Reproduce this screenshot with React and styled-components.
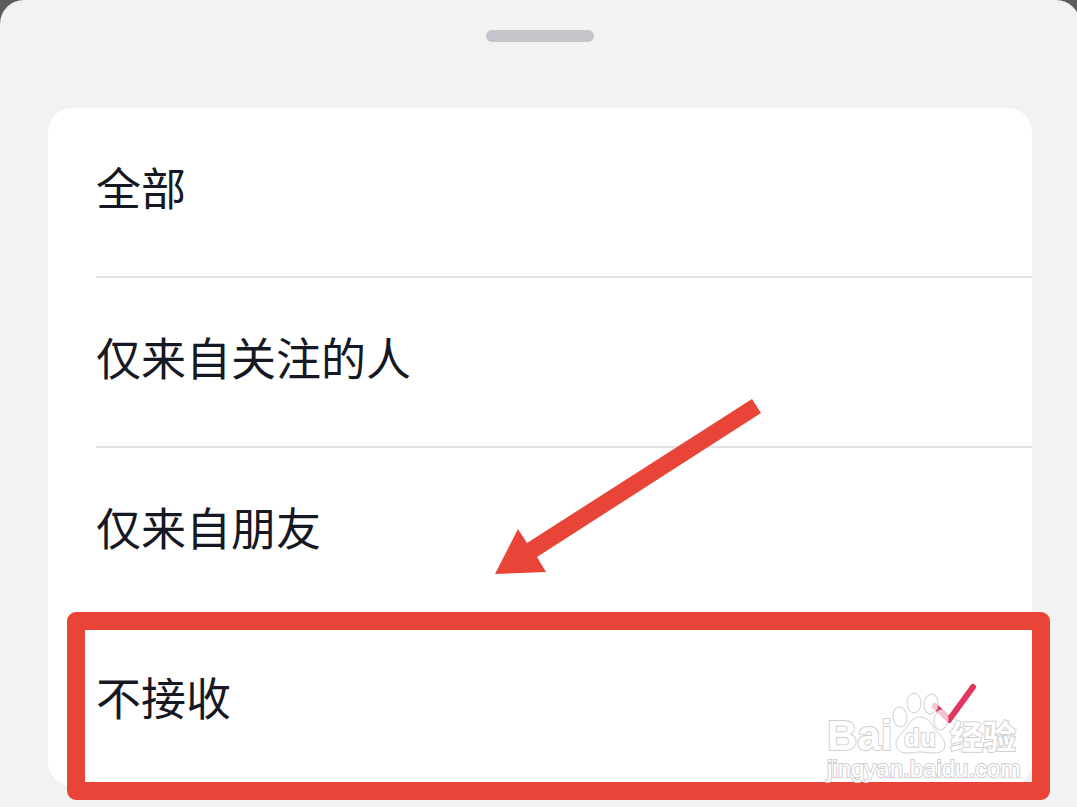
import React, { useState } from "react";
import styled, { createGlobalStyle } from "styled-components";

const GlobalStyle = createGlobalStyle`
  * { box-sizing: border-box; }
  body {
    margin: 0;
    background: #5c5c5c;
    color: #161823;
    font-family: "Noto Sans CJK SC", "Noto Sans", sans-serif;
  }
`;

const Backdrop = styled.main`
  background: #5c5c5c;
  overflow: hidden;
`;

const Sheet = styled.section`
  display: flex;
  flex-direction: column;
  min-height: 100vh;
  margin-right: -3px;
  padding: 30px 48px 21px;
  background: #f2f2f2;
  border-radius: 24px 24px 0 0;
`;

const Handle = styled.div`
  align-self: center;
  width: 108px;
  height: 12px;
  margin-bottom: 66px;
  border-radius: 6px;
  background: #c5c5cb;
`;

const OptionList = styled.div`
  position: relative;
  background: #ffffff;
  border-radius: 24px;
`;

const Option = styled.label`
  position: relative;
  display: flex;
  align-items: center;
  justify-content: space-between;
  height: 168px;
  margin-left: 48px;
  padding: 0 56px 10px 0;
  font-size: 45px;
  line-height: 64px;
  cursor: pointer;

  & + & {
    height: 170px;
    border-top: 2px solid #e3e3e4;
  }
`;

const Radio = styled.input`
  position: absolute;
  opacity: 0;
  pointer-events: none;
`;

const Check = styled.svg`
  width: 44px;
  height: 52px;
  fill: none;
  stroke: #e0365f;
  stroke-width: 6;
  stroke-linecap: round;
`;

const Highlight = styled.div`
  position: absolute;
  inset: auto -18px -14px 19px;
  height: 188px;
  border: 18px solid #e84538;
  border-radius: 9px;
  pointer-events: none;
`;

const Arrow = styled.svg`
  position: absolute;
  left: 446px;
  top: 290px;
  width: 268px;
  height: 178px;
  fill: #e84538;
  pointer-events: none;
`;

const Watermark = styled.svg`
  position: absolute;
  right: 10px;
  bottom: 0;
  width: 198px;
  height: 98px;
  fill: #ffffff;
  fill-opacity: 0.7;
  stroke: #d0d0d0;
  stroke-width: 1;
  pointer-events: none;
`;

const WatermarkText = styled.text`
  font-family: ${(p) => p.$family || "Liberation Sans"}, "Noto Sans CJK SC", sans-serif;
  font-size: ${(p) => p.$size}px;
  font-weight: ${(p) => p.$weight || 700};
  fill-opacity: 1;
  stroke-width: 2;
  paint-order: stroke;
`;

const options = ["全部", "仅来自关注的人", "仅来自朋友", "不接收"];

export default function App() {
  const [selected, setSelected] = useState("不接收");

  return (
    <>
      <GlobalStyle />
      <Backdrop>
        <Sheet>
          <Handle />
          <OptionList role="radiogroup">
            {options.map((name) => (
              <Option key={name}>
                <Radio
                  type="radio"
                  name="audience"
                  checked={selected === name}
                  onChange={() => setSelected(name)}
                />
                <span>{name}</span>
                {selected === name && (
                  <Check viewBox="0 0 44 52" aria-hidden="true">
                    <path d="M3 35L17 49L41 16" strokeLinejoin="miter" />
                  </Check>
                )}
              </Option>
            ))}
            <Highlight />
            <Arrow viewBox="0 0 268 178" aria-hidden="true">
              <path d="M258 1L267 15L43 159L52 174L1 176L24 131L33 145Z" />
            </Arrow>
            <Watermark viewBox="0 0 198 98">
              <WatermarkText x="3" y="62" $size={42}>Bai</WatermarkText>
              <ellipse cx="76" cy="29" rx="7" ry="10" transform="rotate(-8 76 29)" />
              <ellipse cx="90" cy="15" rx="7" ry="10" />
              <ellipse cx="107" cy="16" rx="7" ry="10" transform="rotate(8 107 16)" />
              <ellipse cx="117" cy="32" rx="7" ry="10" transform="rotate(8 117 32)" />
              <path d="M96 29C103 29 107 34 110 40C114 46 121 50 121 57C121 63 116 65 110 65C104 65 101 64 96 64C91 64 88 65 82 65C76 65 72 61 72 56C72 49 79 45 83 39C86 34 89 29 96 29Z" />
              <WatermarkText x="80" y="59" $size={26}>du</WatermarkText>
              <WatermarkText x="126" y="61" $size={33} $family="Noto Sans CJK SC">经验</WatermarkText>
              <WatermarkText x="3" y="89" $size={24} $weight={400}>jingyan.baidu.com</WatermarkText>
            </Watermark>
          </OptionList>
        </Sheet>
      </Backdrop>
    </>
  );
}
